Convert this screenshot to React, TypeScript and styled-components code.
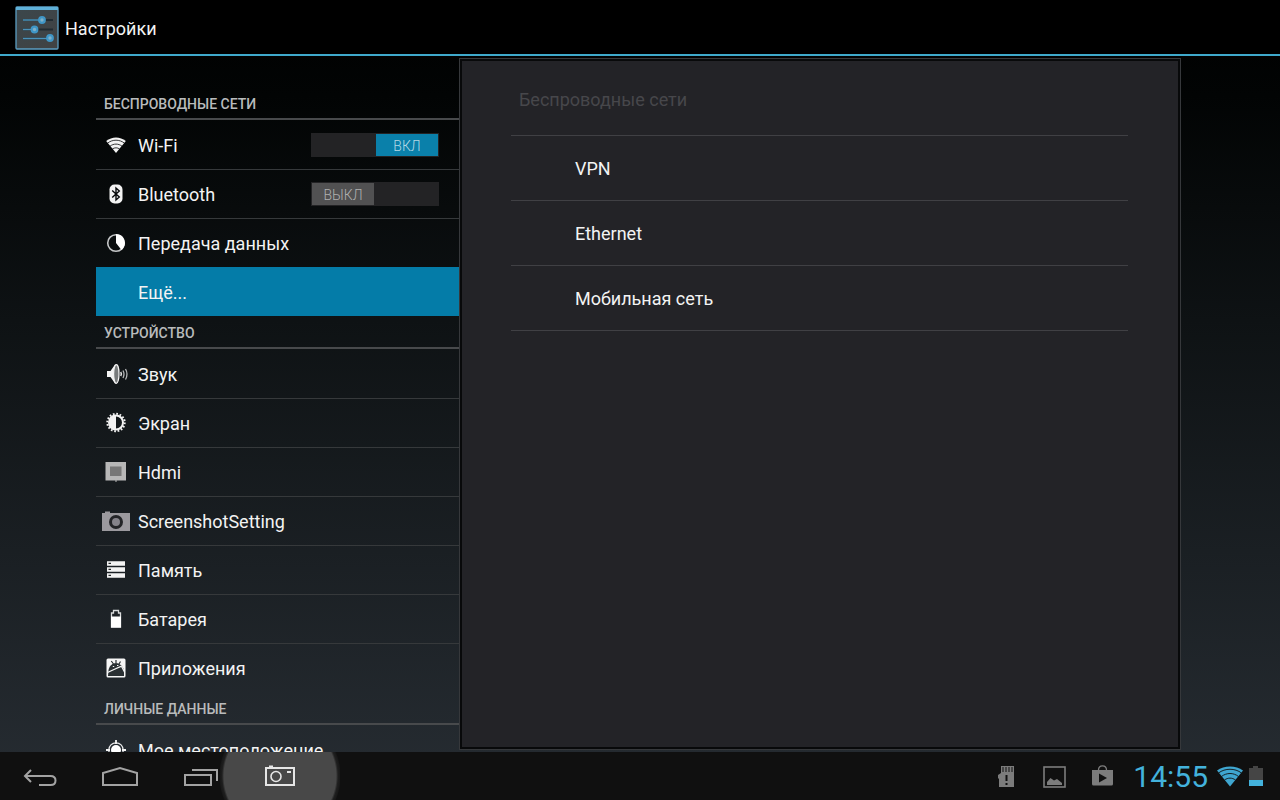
import React from 'react';
import styled, { createGlobalStyle, css } from 'styled-components';

const GlobalStyle = createGlobalStyle`
  * { box-sizing: border-box; }
  html, body, #root { height: 100%; }
  body {
    margin: 0;
    font-family: Roboto, "Noto Sans", sans-serif;
    color: #f3f3f3;
    background: #000;
  }
  button, input { font: inherit; color: inherit; }
`;

const Screen = styled.div`
  height: 100%;
  min-height: 320px;
  display: flex;
  flex-direction: column;
  overflow: hidden;
  background: linear-gradient(to bottom, #000000 0, #020404 12%, #0e1214 40%, #272d33 100%);
`;

const TitleBar = styled.header`
  flex: none;
  display: flex;
  align-items: center;
  gap: 6px;
  height: 56px;
  padding: 2px 15px 0;
  background: #000;
  border-bottom: 2px solid #3fa9cb;
`;

const Title = styled.h1`
  margin: 0;
  padding-top: 2px;
  font-size: 18px;
  line-height: 24px;
  font-weight: 400;
`;

const Body = styled.div`
  flex: 1;
  min-height: 0;
  display: grid;
  grid-template-columns: 363fr 722fr;
  padding: 2px 99px 2px 96px;
`;

const Sidebar = styled.nav`
  min-height: 0;
  overflow: hidden;
  padding-top: 29px;
  margin-bottom: -2px;
`;

const SectionTitle = styled.h2`
  margin: 0;
  height: 33px;
  padding: 2px 8px 0;
  border-bottom: 2px solid #484a4c;
  font-size: 14px;
  line-height: 31px;
  font-weight: 500;
  color: #b9bbbc;
`;

const List = styled.ul`
  margin: 0;
  padding: 0;
  list-style: none;
`;

const Row = styled.li<{ $selected?: boolean }>`
  display: flex;
  align-items: center;
  height: 49px;
  padding-right: 20px;
  border-top: 1px solid #36393b;
  &:first-child { border-top-color: transparent; }
  ${p => p.$selected && css`
    background: #047ca8;
    border-top-color: #047ca8;
  `}
`;

const RowLink = styled.a`
  flex: 1;
  display: flex;
  align-items: center;
  gap: 8px;
  padding-left: 6px;
  font-size: 18px;
  line-height: 24px;
  color: inherit;
  text-decoration: none;
  white-space: nowrap;
`;

const RowLabel = styled.span`
  padding-top: 2px;
`;

const IconSlot = styled.span`
  flex: none;
  width: 28px;
  height: 28px;
  svg { display: block; }
`;

const Switch = styled.label`
  position: relative;
  flex: none;
  display: flex;
  width: 128px;
  height: 24px;
  padding: 1px;
  background: #232325;
  cursor: pointer;
`;

const SwitchInput = styled.input`
  position: absolute;
  inset: 0;
  width: 100%;
  height: 100%;
  margin: 0;
  opacity: 0;
`;

const Thumb = styled.span<{ $on: boolean }>`
  width: 62px;
  height: 22px;
  margin-left: ${p => (p.$on ? 'auto' : '0')};
  background: ${p => (p.$on ? '#0a80aa' : '#515152')};
  color: ${p => (p.$on ? '#b4d8e5' : '#b0b0b0')};
  font-size: 14px;
  font-weight: 300;
  line-height: 25px;
  text-align: center;
`;

const Panel = styled.main`
  min-width: 0;
  border: 1px solid #36383b;
  padding: 2px;
  background: #08090a;
`;

const PanelInner = styled.section`
  height: 100%;
  padding: 13px 50px 0 49px;
  background: #232327;
`;

const PanelTitle = styled.h2`
  margin: 0;
  height: 62px;
  padding: 14px 8px 0;
  border-bottom: 1px solid #404044;
  font-size: 18px;
  line-height: 24px;
  font-weight: 400;
  color: #47474b;
`;

const PanelRow = styled.li`
  height: 65px;
  border-bottom: 1px solid #404044;
`;

const PanelLink = styled.a`
  display: block;
  padding: 0 64px;
  font-size: 18px;
  line-height: 66px;
  color: inherit;
  text-decoration: none;
`;

const SystemBar = styled.footer`
  flex: none;
  display: flex;
  align-items: center;
  justify-content: space-between;
  height: 48px;
  overflow: hidden;
  background: #101010;
`;

const NavKeys = styled.div`
  display: flex;
`;

const NavKey = styled.button<{ $pressed?: boolean }>`
  width: 80px;
  height: 48px;
  padding: 2px 0 0;
  border: 0;
  background: none;
  svg { display: block; margin: 0 auto; }
  ${p => p.$pressed && css`
    width: 120px;
    margin-left: -20px;
    background: radial-gradient(circle 60px at 50% 50%, #484848 0, #484848 56px, #1f1f1f 58px, #181818 60px, #101010 61px);
  `}
`;

const Status = styled.div`
  display: flex;
  align-items: center;
  padding: 2px 16px 0 0;
  color: #43b2dc;
  svg { display: block; }
`;

const Notices = styled.div`
  display: flex;
  gap: 24px;
  margin-right: 19px;
`;

const Clock = styled.time`
  font-size: 30px;
  line-height: 46px;
  margin-right: 8px;
`;

const Icon = ({ children, w = 28, h = 28 }: { children: React.ReactNode; w?: number; h?: number }) => (
  <svg width={w} height={h} viewBox={`0 0 ${w} ${h}`} fill="none" aria-hidden="true">{children}</svg>
);

const SettingsIcon = () => (
  <Icon w={44} h={44}>
    <defs>
      <linearGradient id="tile" x1="0" y1="0" x2="1" y2="1">
        <stop offset="0" stopColor="#3b474c" />
        <stop offset="1" stopColor="#414243" />
      </linearGradient>
    </defs>
    <rect x="1" y="1" width="42" height="42" rx="1" fill="url(#tile)" stroke="#5b9dc2" strokeWidth="1.300" />
    <path d="M1 2.500H43" stroke="#5fb0d8" strokeWidth="3" />
    <path d="M8 14H38M8 23.500H38M8 32.500H38" stroke="#222c32" strokeWidth="2" />
    <path d="M8 14H25M8 23.500H18M8 32.500H34" stroke="#4a92ba" strokeWidth="1.500" />
    <g fill="#7fb0c8" stroke="#3f96c6" strokeWidth="2.200">
      <circle cx="27" cy="14" r="2.800" /><circle cx="19.500" cy="23.500" r="2.800" /><circle cx="35" cy="32" r="2.800" />
    </g>
  </Icon>
);

const icons: Record<string, React.ReactNode> = {
  wifi: (
    <Icon>
      <path d="M14 22L4.200 10C10 5.200 18 5.200 23.800 10Z" fill="#f3f3f3" />
      <path d="M5.500 12.200C10.500 8.200 17.500 8.200 22.500 12.200M8 15.200C11.500 12.400 16.500 12.400 20 15.200M10.300 18C12.500 16.400 15.500 16.400 17.700 18" stroke="#07090a" strokeWidth="0.800" />
    </Icon>
  ),
  bluetooth: (
    <Icon>
      <rect x="7.500" y="4.500" width="13" height="19" rx="5" fill="#f3f3f3" />
      <path d="M10.200 10.500L17.300 17L14 20V8L17.300 11L10.200 17.500" stroke="#07090a" strokeWidth="1.400" />
    </Icon>
  ),
  data: (
    <Icon>
      <circle cx="14" cy="14" r="8.300" stroke="#c4c6c7" strokeWidth="1.600" />
      <path d="M14 14V5A9 9 0 0 1 19.500 21Z" fill="#fff" />
    </Icon>
  ),
  sound: (
    <Icon>
      <path d="M5 11H8.500L13 4.500H14.500V23.500H13L8.500 17H5Z" fill="#f3f3f3" />
      <ellipse cx="14.300" cy="14" rx="2.700" ry="9.300" fill="#777a7b" stroke="#f3f3f3" strokeWidth="1.200" />
      <path d="M18.700 12Q20 14 18.700 16" stroke="#e5e5e5" strokeWidth="1.500" />
      <path d="M21 10.500Q23 14 21 18M23.500 9Q26.500 14 23.500 19.500" stroke="#b5b7b8" strokeWidth="1.300" />
    </Icon>
  ),
  display: (
    <Icon>
      <circle cx="14" cy="13.500" r="8.700" stroke="#f3f3f3" strokeWidth="2" strokeDasharray="1.700 1.715" />
      <circle cx="14" cy="13.500" r="7" stroke="#f3f3f3" strokeWidth="2" />
      <path d="M14 6.500A7 7 0 0 0 14 20.500Z" fill="#f3f3f3" />
    </Icon>
  ),
  hdmi: (
    <Icon>
      <rect x="3.500" y="4" width="20.500" height="18.500" fill="#b7b7b7" />
      <rect x="8" y="8.500" width="11.500" height="9.500" fill="#777" />
      <path d="M13 22.500H15V23.500H13Z" fill="#b7b7b7" />
    </Icon>
  ),
  camera: (
    <Icon>
      <path d="M0 6H3V4.500H8V6H28V24H0Z" fill="#9b999e" />
      <circle cx="14" cy="15" r="5.500" fill="#85838a" stroke="#232427" strokeWidth="3" />
    </Icon>
  ),
  storage: (
    <Icon>
      <path d="M5 5.200H23V9.700H5ZM5 11.200H23V15.700H5ZM5 17.200H23V21.700H5Z" fill="#f3f3f3" />
      <path d="M6.500 7.400H9M6.500 13.400H9M6.500 19.400H9" stroke="#24292b" strokeWidth="1.200" />
    </Icon>
  ),
  battery: (
    <Icon>
      <path d="M9.500 22V8H11.500V5.500H16.500V8H18.500V22Z" stroke="#d8dadb" strokeWidth="1.300" />
      <path d="M9 11.500H19V22.500H9Z" fill="#fff" />
    </Icon>
  ),
  apps: (
    <Icon>
      <rect x="4.500" y="4.500" width="19" height="19" rx="1.500" fill="#f6f6f6" />
      <path d="M6.500 16C7.500 11.500 10.500 9.200 14 9C17.500 9.200 20.500 12 22 16V22H6Z" fill="#2a3033" />
      <path d="M9.300 7L11.500 10M14 6V9M18.500 7.500L17 10" stroke="#2a3033" strokeWidth="1.200" />
      <path d="M5.500 18.500L12 15.500L19.500 12.200M19.500 12.200L22.500 18" stroke="#f6f6f6" strokeWidth="1.300" />
      <path d="M10.800 12.500H12.200M15 11.500H16.400" stroke="#f6f6f6" strokeWidth="1.200" />
    </Icon>
  ),
  location: (
    <Icon>
      <circle cx="14" cy="14" r="7.200" stroke="#e6e7e8" strokeWidth="1.300" />
      <circle cx="14" cy="14" r="5" fill="#fff" />
      <path d="M14 4V8M14 20V24M4 14H8M20 14H24" stroke="#f3f3f3" strokeWidth="1.800" />
    </Icon>
  ),
};

type Item = { label: string; icon?: string; toggle?: boolean; selected?: boolean };

const sections: { title: string; items: Item[] }[] = [
  {
    title: 'БЕСПРОВОДНЫЕ СЕТИ',
    items: [
      { label: 'Wi-Fi', icon: 'wifi', toggle: true },
      { label: 'Bluetooth', icon: 'bluetooth', toggle: false },
      { label: 'Передача данных', icon: 'data' },
      { label: 'Ещё...', selected: true },
    ],
  },
  {
    title: 'УСТРОЙСТВО',
    items: [
      { label: 'Звук', icon: 'sound' },
      { label: 'Экран', icon: 'display' },
      { label: 'Hdmi', icon: 'hdmi' },
      { label: 'ScreenshotSetting', icon: 'camera' },
      { label: 'Память', icon: 'storage' },
      { label: 'Батарея', icon: 'battery' },
      { label: 'Приложения', icon: 'apps' },
    ],
  },
  { title: 'ЛИЧНЫЕ ДАННЫЕ', items: [{ label: 'Мое местоположение', icon: 'location' }] },
];

const Toggle = ({ label, initial }: { label: string; initial: boolean }) => {
  const [on, setOn] = React.useState(initial);
  return (
    <Switch>
      <SwitchInput type="checkbox" aria-label={label} checked={on} onChange={e => setOn(e.target.checked)} />
      <Thumb $on={on}>{on ? 'ВКЛ' : 'ВЫКЛ'}</Thumb>
    </Switch>
  );
};

export default function App() {
  return (
    <Screen>
      <GlobalStyle />
      <TitleBar>
        <SettingsIcon />
        <Title>Настройки</Title>
      </TitleBar>
      <Body>
        <Sidebar>
          {sections.map(section => (
            <React.Fragment key={section.title}>
              <SectionTitle>{section.title}</SectionTitle>
              <List>
                {section.items.map(item => (
                  <Row key={item.label} $selected={item.selected}>
                    <RowLink href="#">
                      <IconSlot>{item.icon && icons[item.icon]}</IconSlot>
                      <RowLabel>{item.label}</RowLabel>
                    </RowLink>
                    {item.toggle !== undefined && <Toggle label={item.label} initial={item.toggle} />}
                  </Row>
                ))}
              </List>
            </React.Fragment>
          ))}
        </Sidebar>
        <Panel>
          <PanelInner>
            <PanelTitle>Беспроводные сети</PanelTitle>
            <List>
              {['VPN', 'Ethernet', 'Мобильная сеть'].map(label => (
                <PanelRow key={label}><PanelLink href="#">{label}</PanelLink></PanelRow>
              ))}
            </List>
          </PanelInner>
        </Panel>
      </Body>
      <SystemBar>
        <NavKeys>
          <NavKey aria-label="Назад">
            <Icon w={36} h={24}>
              <path d="M9 5L3 11L9 17M3.500 11H28.500Q33.500 11 33.500 15.500T28.500 20H17" stroke="#a3a3a3" strokeWidth="2" />
            </Icon>
          </NavKey>
          <NavKey aria-label="Домой">
            <Icon w={38} h={24}>
              <path d="M2 20V8L19 3L36 8V20Z" stroke="#a3a3a3" strokeWidth="2" />
            </Icon>
          </NavKey>
          <NavKey aria-label="Недавние приложения">
            <Icon w={36} h={24}>
              <path d="M3 10H29V20H3ZM10 5H35V16" stroke="#a3a3a3" strokeWidth="2" />
            </Icon>
          </NavKey>
          <NavKey $pressed aria-label="Снимок экрана">
            <Icon w={32} h={24}>
              <path d="M2 3H30V20H2Z" stroke="#e6e6e6" strokeWidth="2" />
              <path d="M5 1.500H9M23 7H27" stroke="#e6e6e6" strokeWidth="2" />
              <circle cx="12" cy="11.500" r="5" stroke="#e6e6e6" strokeWidth="1.600" />
            </Icon>
          </NavKey>
        </NavKeys>
        <Status>
          <Notices>
            <Icon w={24} h={24}>
              <path d="M7 1H20V22H5V14L4 13V10L7 8Z" fill="#7c7c7c" />
              <path d="M9 2V7M12 2V7M15 2V7M18 2V7" stroke="#101010" />
              <path d="M12.500 10V16M12.500 18V20" stroke="#101010" strokeWidth="2" />
            </Icon>
            <Icon w={24} h={24}>
              <rect x="2" y="2" width="21" height="20" stroke="#7c7c7c" strokeWidth="1.600" />
              <path d="M5 20V17L8.500 13L12 15.500L15 14L20 18V20Z" fill="#7c7c7c" />
            </Icon>
            <Icon w={24} h={24}>
              <path d="M2 5H23V19Q23 20.500 21.500 20.500H3.500Q2 20.500 2 19Z" fill="#7c7c7c" />
              <path d="M8.500 5Q8.500 0.800 12.500 0.800T16.500 5" stroke="#7c7c7c" strokeWidth="1.300" />
              <path d="M9 8.500V17.500L17 13Z" fill="#101010" />
            </Icon>
          </Notices>
          <Clock>14:55</Clock>
          <Icon w={28} h={24}>
            <path d="M14 21.500L1 5.500C8 0 20 0 27 5.500Z" fill="#3fa6d0" />
            <path d="M2.500 8C9 3 19 3 25.500 8M5.500 11.500C10.500 7.500 17.500 7.500 22.500 11.500M8.500 15C12 12.500 16 12.500 19.500 15" stroke="#101010" strokeWidth="0.900" />
          </Icon>
          <Icon w={20} h={24}>
            <path d="M5 3H9V1H14V3H19V15H5Z" fill="#454545" />
            <path d="M5 15H19V21H5Z" fill="#43b2dc" />
          </Icon>
        </Status>
      </SystemBar>
    </Screen>
  );
}
